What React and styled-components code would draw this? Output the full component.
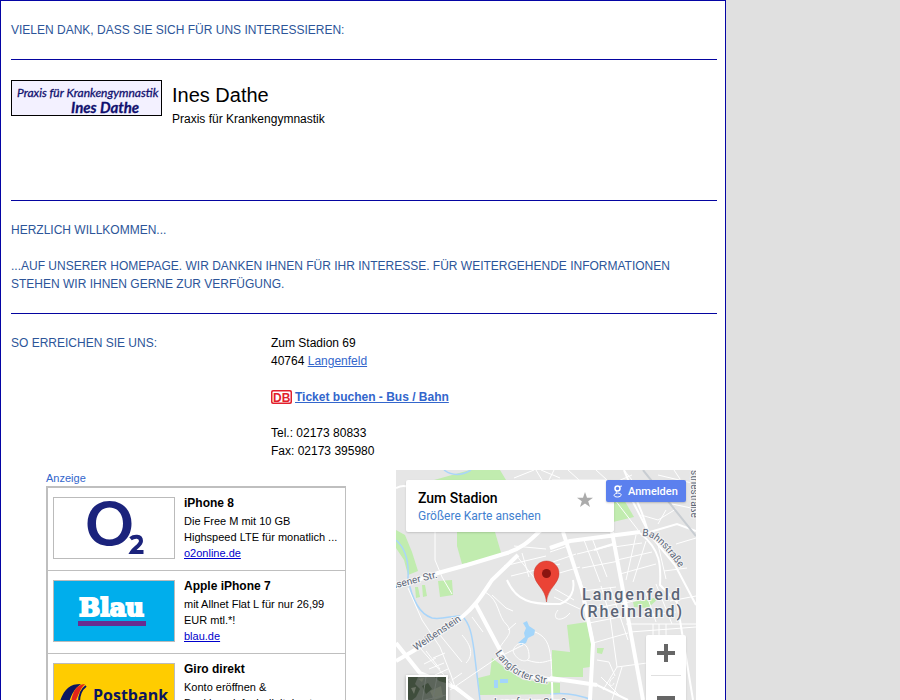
import styled, { createGlobalStyle } from "styled-components";

const GlobalStyle = createGlobalStyle`
	body {
		margin: 0;
		background: #e0e0e0;
		font-family: "Liberation Sans", Arial, sans-serif;
		font-size: 12px;
		line-height: 18px;
		color: #000;
	}
`;

const Page = styled.main`
	box-sizing: border-box;
	max-width: 726px;
	min-height: 100vh;
	padding: 0 8px 20px 10px;
	border: 1px solid #0505a5;
	background: #fff;
`;
const Section = styled.section`
	padding: 20px 0;
	border-bottom: 1px solid #0505a0;
`;
const Heading = styled.h2`
	margin: 0;
	font-size: 12px;
	font-weight: normal;
	text-transform: uppercase;
	color: #2c5599;
`;
const Intro = styled.p`
	margin: 18px 0 0;
	text-transform: uppercase;
	color: #2c5599;
`;
const Profile = styled.div`
	display: flex;
	align-items: flex-start;
	gap: 10px;
	min-height: 100px;
`;
const PraxisLogo = styled.svg`
	box-sizing: border-box;
	width: 151px;
	height: 36px;
	border: 1px solid #000;
	background: #f3f1ff;
`;
const Name = styled.h1`
	margin: 0;
	font-size: 20px;
	font-weight: normal;
	line-height: 30px;
`;
const Text = styled.p`
	margin: 0;
`;
const Contact = styled.section`
	display: grid;
	grid-template-columns: 260px 1fr;
	padding: 20px 0 10px;
`;
const Address = styled.address`
	display: grid;
	gap: 18px;
	font-style: normal;
`;
const Link = styled.a`
	color: #3366cc;
	font-weight: ${(props) => (props.$bold ? "bold" : "normal")};
`;
const Ticket = styled.p`
	display: flex;
	align-items: center;
	gap: 3px;
	margin: 0;
`;
const Columns = styled.div`
	display: flex;
	flex-wrap: wrap;
	align-items: flex-start;
	gap: 20px 50px;
	padding-left: 35px;
`;
const Ads = styled.aside`
	width: 300px;
	font-size: 11px;
	line-height: 16px;
`;
const AdLabel = styled.div`
	color: #3366cc;
`;
const AdList = styled.ul`
	margin: 0;
	padding: 0;
	list-style: none;
	border: solid #bfbfbf;
	border-width: 2px 1px 1px 2px;
`;
const AdItem = styled.li`
	box-sizing: border-box;
	display: flex;
	gap: 9px;
	min-height: 83px;
	padding: 7px 5px;
	border-bottom: 1px solid #bfbfbf;

	&:last-child {
		border-bottom: none;
	}
`;
const AdLogo = styled.svg`
	box-sizing: border-box;
	flex: none;
	width: 122px;
	height: 62px;
	margin-top: 2px;
	border: 1px solid #bbb;
	background: ${(props) => props.$background};
`;
const AdTitle = styled.h3`
	margin: 0 0 2px;
	font-size: 12px;
`;
const AdLink = styled.a`
	color: #0000cc;
`;
const MapBox = styled.div`
	position: relative;
	width: 300px;
	height: 300px;
	overflow: hidden;
	font-family: Roboto, sans-serif;
`;
const MapSvg = styled.svg`
	display: block;
	width: 100%;
	height: 100%;
`;
const PlaceCard = styled.div`
	position: absolute;
	top: 10px;
	left: 10px;
	box-sizing: border-box;
	display: flex;
	justify-content: space-between;
	width: 208px;
	height: 52px;
	padding: 9px 20px 9px 12px;
	border-radius: 2px;
	background: #fff;
	box-shadow: 0 1px 2px rgba(0, 0, 0, 0.15);
`;
const PlaceName = styled.div`
	font-size: 14px;
	font-weight: 500;
`;
const PlaceLink = styled.a`
	font-size: 12px;
	line-height: 16px;
	color: #427fd0;
	text-decoration: none;
`;
const StarButton = styled.button`
	width: 18px;
	height: 22px;
	padding: 2px 0;
	border: none;
	background: none;
	line-height: 0;
`;
const SignIn = styled.button`
	position: absolute;
	top: 10px;
	right: 10px;
	display: flex;
	align-items: center;
	gap: 5px;
	width: 80px;
	height: 22px;
	padding: 0 7px;
	border: none;
	border-radius: 2px;
	background: #5b80ee;
	color: #fff;
	font-family: Roboto, sans-serif;
	font-size: 11px;
	font-weight: 500;
	box-shadow: 0 1px 2px rgba(0, 0, 0, 0.2);
`;
const ZoomControl = styled.div`
	position: absolute;
	top: 165px;
	right: 10px;
	width: 40px;
	border-radius: 2px;
	background: #fff;
	box-shadow: 0 1px 2px rgba(0, 0, 0, 0.15);
`;
const ZoomButton = styled.button`
	display: flex;
	justify-content: center;
	width: 100%;
	height: 40px;
	padding: ${(props) => (props.$out ? "14px" : "9px")} 0 0;
	border: none;
	background: none;
`;
const Divider = styled.div`
	height: 1px;
	margin: 0 5px;
	background: #e0e0e0;
`;
const Satellite = styled.button`
	position: absolute;
	top: 205px;
	left: 10px;
	width: 42px;
	height: 42px;
	padding: 0;
	border: 2px solid #fff;
	line-height: 0;
	box-shadow: 0 1px 3px rgba(0, 0, 0, 0.3);
`;

const O2Logo = () => (
	<AdLogo viewBox="0 0 120 60" $background="#fff" role="img" aria-label="O2">
		<path
			fillRule="evenodd"
			fill="#1b237c"
			d="M55.500 3C69 3 77.500 12.500 77.500 25.500C77.500 39 69 48 55.500 48C42 48 33.500 39 33.500 25.500C33.500 12.500 42 3 55.500 3ZM55.500 9.500C47 9.500 42 16.500 42 25.500C42 35 47 41.500 55.500 41.500C64 41.500 69 35 69 25.500C69 16.500 64 9.500 55.500 9.500Z"
		/>
		<path
			fill="none"
			stroke="#1b237c"
			strokeWidth="4"
			d="M76.500 40.800C80 38 87 37.500 87 43C87 47 80.500 50 78 54H89.500"
		/>
	</AdLogo>
);

const BlauLogo = () => (
	<AdLogo viewBox="0 0 120 60" $background="#00aeec">
		<text
			x="25"
			y="35"
			fill="#fff"
			stroke="#fff"
			strokeWidth="2"
			fontFamily="DejaVu Serif, serif"
			fontSize="25"
			fontWeight="bold"
		>
			Blau
		</text>
		<path fill="#692c91" d="M24 40H92V45H24Z" />
	</AdLogo>
);

const PostbankLogo = () => (
	<AdLogo viewBox="0 0 120 60" $background="#fc0">
		<path
			fill="#0b1560"
			d="M6 37C11 24 16 20 27 20C20 25 18 30 15 38L19 48H12Z"
		/>
		<path
			fill="#e2231a"
			d="M17 38C19 27 22 21 31 20C25 26 25 31 21 38L25 48H20Z"
		/>
		<path fill="none" stroke="#0b1560" strokeWidth="2" d="M25 38C25 29 28 25 32 22" />
		<text
			x="39"
			y="37"
			fill="#0b1560"
			fontFamily="Open Sans, sans-serif"
			fontSize="16"
			fontWeight="bold"
		>
			Postbank
		</text>
	</AdLogo>
);

const ads = [
	{
		title: "iPhone 8",
		lines: ["Die Free M mit 10 GB", "Highspeed LTE für monatlich ..."],
		site: "o2online.de",
		Logo: O2Logo,
	},
	{
		title: "Apple iPhone 7",
		lines: ["mit Allnet Flat L für nur 26,99", "EUR mtl.*!"],
		site: "blau.de",
		Logo: BlauLogo,
	},
	{
		title: "Giro direkt",
		lines: ["Konto eröffnen &", "Banking einfach digital nutzen"],
		site: "postbank.de",
		Logo: PostbankLogo,
	},
];

const CityMap = () => (
	<MapSvg viewBox="0 0 300 300" role="img" aria-label="Karte">
		<defs>
			<path id="bahnstrasse" d="M246 66C256 66 264 70 287 103" />
			<path id="langforter" d="M99 183C109 198 122 212 158 214" />
		</defs>
		<path fill="#e6e6e6" d="M0 0H300V300H0Z" />
		<g fill="#c1ecaf">
			<path d="M38 10L56 5L74 0H104L110 10Z" />
			<path d="M61 62H99L106 86L66 94L61 76Z" />
			<path d="M0 60L9 65L16 82L22 101L12 105L8 90L0 78Z" />
			<path d="M217 30L227 28L238 47L217 52Z" />
			<path d="M171 155L191 152L195 173L194 197L187 198V207L156 207V180L174 182Z" />
			<path d="M201 178L208 178L206 184L201 183Z" />
			<path d="M237 132L264 127L252 138L238 137Z" />
			<path d="M42 111L56 110L57 125L44 127Z" />
			<path d="M19 117L22 117L24 127L20 128Z" />
			<path d="M26 115L29 115L31 126L27 127Z" />
			<path d="M96 188L109 198L127 210L164 213V224L84 225L82 208L94 205Z" />
		</g>
		<g fill="none" stroke="#a9d5fa" strokeWidth="1.500">
			<path d="M48 0C56 6 65 6 75 0M0 70C9 78 13 92 12 108C15 125 21 143 36 148C46 150 58 145 66 146C74 153 76 166 78 180L84 230L86 300" />
			<path d="M154 224C170 222 184 225 196 230" />
		</g>
		<path
			fill="#a3d5fa"
			d="M127 153L131 151L133 156L139 160L138 165L132 168L130 173L125 175L122 173L129 167L128 163L130 158ZM98 210H102V218H98ZM104 209H112V213H104Z"
		/>
		<g fill="none" stroke="#fff" strokeWidth="1">
			<path d="M12 118L26 150L44 177L55 205L60 220L84 236M54 220L101 188L127 175M62 150L44 165L66 192M66 165C75 175 78 185 70 193M39 62L39 90L46 107L56 124" />
			<path d="M89 122C104 130 101 146 111 155C117 163 112 165 104 177M96 125L110 138L117 141M120 153L112 160M76 147L87 162M117 181C120 170 134 170 133 188C130 194 120 190 117 181M139 162C154 168 155 180 156 210M131 190C145 195 150 191 156 190" />
			<path d="M140 0L146 10M158 0L153 10M172 0L183 10M120 85L140 110M108 96L150 86M115 106L164 94M126 83L133 107M118 76L150 79M145 0L164 8M118 8L138 0" />
			<path d="M156 10H210M200 0L211 10M228 0L236 10M213 15L236 5M245 45L262 50L280 39M256 15L270 27M262 5L300 14M270 18L285 10M278 0L284 9M270 40L262 54M219 30L242 60M236 26L246 23M276 34L300 39" />
			<path d="M154 82L172 76M157 92L180 84M160 104L184 97M188 70L204 112M196 68L211 107M181 84L218 75M186 98L223 91M218 77L246 73M221 90L256 82M224 104L260 94M240 65L230 110M250 71L237 112M261 70L270 109M280 74L300 68M268 101L291 98" />
			<path d="M159 119L178 130M158 127L184 139M162 140C154 150 166 153 174 143M191 140L226 133M193 153L229 146M205 116L214 146L221 197M187 121L220 117M214 117L232 170M225 134L250 128M231 148L280 142M230 154H300M234 162L300 157M260 114L276 154M249 120L260 152M274 131L300 126M257 154V170M263 154V170M270 154V170" />
			<path d="M197 173L232 163M221 197L251 193M221 197L207 220M201 190L213 192L219 206M218 213C215 220 210 212 218 207M205 207L226 228M226 197L216 230M24 178L56 214M30 181L44 199M37 188L49 183M28 194L40 188M33 199L48 193M39 205L52 199M41 213L54 209M56 210L66 203" />
		</g>
		<g fill="none" stroke="#fff" strokeWidth="2">
			<path d="M0 18C8 14 13 16 16 22M111 110C120 131 135 135 164 134C175 130 179 120 177 110M154 78L174 71L244 62M167 62L184 112M216 62L226 115L247 230L258 300M236 30L254 65L279 95L300 135M244 63C265 80 265 96 264 115L281 132L297 230M184 110L197 170L194 230V300M154 208L201 215L232 230M156 212L158 300" />
			<path d="M228 0L246 43L253 64M254 62L281 54L300 61M198 80L217 74" />
		</g>
		<g fill="none" stroke="#fff" strokeWidth="4">
			<path d="M0 117L42 103L71 95L111 83C132 77 140 62 157 50M0 191L24 177L66 147C80 136 88 122 96 110L122 85M0 173L24 203L60 218L95 245M79 133L104 180C116 205 135 208 164 210" />
			<path d="M167 62L186 120L197 174L194 230M154 208L201 215M216 62L226 115L247 230M154 78L174 71L244 62" />
		</g>
		<path fill="none" stroke="#c8cdd2" strokeWidth="2" d="M247 0L300 66" />
		<g
			fill="#5b6577"
			stroke="#f5f5f5"
			strokeWidth="2"
			paintOrder="stroke"
			fontFamily="Roboto, sans-serif"
			fontSize="10"
		>
			<text transform="translate(-4 119) rotate(-14)">usener Str.</text>
			<text transform="translate(20 181) rotate(-34)">Weißenstein</text>
			<text>
				<textPath href="#langforter">Langforter Str.</textPath>
			</text>
			<text>
				<textPath href="#bahnstrasse">Bahnstraße</textPath>
			</text>
			<text transform="translate(295 0) rotate(90)">striestraße</text>
			<text x="98" y="236">
				Langforter Straße
			</text>
			<g fontSize="16" fontWeight="500" textAnchor="middle" letterSpacing="2">
				<text x="236" y="130">
					Langenfeld
				</text>
				<text x="236" y="147">
					(Rheinland)
				</text>
			</g>
		</g>
		<path
			fill="#ea4335"
			stroke="#c5362b"
			strokeWidth="0.500"
			d="M150.500 132C149.500 118 138 114 138 103.500C138 96.500 143.500 91 150.500 91C157.500 91 163 96.500 163 103.500C163 114 151.500 118 150.500 132Z"
		/>
		<circle cx="150.500" cy="103.500" r="4.500" fill="#8b1410" />
	</MapSvg>
);

const LocationMap = () => (
	<MapBox>
		<CityMap />
		<PlaceCard>
			<div>
				<PlaceName>Zum Stadion</PlaceName>
				<PlaceLink href="#karte">Größere Karte ansehen</PlaceLink>
			</div>
			<StarButton aria-label="Speichern">
				<svg width="18" height="18" viewBox="0 0 18 18">
					<path
						fill="#ababab"
						d="M9 1L11 6.700H17L12.200 10.300L14 16L9 12.500L4 16L5.800 10.300L1 6.700H7Z"
					/>
				</svg>
			</StarButton>
		</PlaceCard>
		<SignIn>
			<svg width="10" height="14" viewBox="0 0 10 14" fill="none" stroke="#fff">
				<ellipse cx="4.500" cy="4.500" rx="2.500" ry="2.500" strokeWidth="1.500" />
				<path d="M6 2.500L9 2M4 7C2 8 3 9 6 9.200C10 10 8 13 4.500 13C0 13 0 10 4 9.200" />
			</svg>
			Anmelden
		</SignIn>
		<Satellite aria-label="Satellit">
			<svg width="38" height="38" viewBox="0 0 38 38">
				<path fill="#5c655b" d="M0 0H38V38H0Z" />
				<path fill="#3f4d3c" d="M0 0H10L7 7L12 12L8 20L3 24L0 22ZM27 0H38V6L31 4ZM14 9L20 6L24 12L18 17Z" />
				<path fill="#6c7466" d="M10 2L16 1L14 5ZM3 11L8 10L6 17ZM22 14L33 9L35 20L26 23Z" />
				<path stroke="#6d756e" d="M18 0L12 38M29 0L22 38M0 27L38 18" />
			</svg>
		</Satellite>
		<ZoomControl>
			<ZoomButton aria-label="Vergrößern">
				<svg width="18" height="18" viewBox="0 0 18 18">
					<path fill="#666" d="M7 0H11V7H18V11H11V18H7V11H0V7H7Z" />
				</svg>
			</ZoomButton>
			<Divider />
			<ZoomButton $out aria-label="Verkleinern">
				<svg width="18" height="18" viewBox="0 0 18 18">
					<path fill="#666" d="M0 6H18V11H0Z" />
				</svg>
			</ZoomButton>
		</ZoomControl>
	</MapBox>
);

const App = () => {
	return (
		<>
			<GlobalStyle />
			<Page>
				<Section>
					<Heading>Vielen Dank, dass Sie sich für uns interessieren:</Heading>
				</Section>
				<Section>
					<Profile>
						<PraxisLogo viewBox="0 0 149 34">
							<g
								fill="#10106e"
								stroke="#10106e"
								strokeWidth="0.300"
								fontFamily="Lato, sans-serif"
								fontStyle="italic"
							>
								<text x="5" y="16" fontSize="12">
									Praxis für Krankengymnastik
								</text>
								<text x="59" y="32" fontSize="15" fontWeight="bold">
									Ines Dathe
								</text>
							</g>
						</PraxisLogo>
						<div>
							<Name>Ines Dathe</Name>
							<Text>Praxis für Krankengymnastik</Text>
						</div>
					</Profile>
				</Section>
				<Section>
					<Heading>Herzlich Willkommen...</Heading>
					<Intro>
						...auf unserer Homepage. Wir danken Ihnen für Ihr Interesse. Für
						weitergehende Informationen stehen wir Ihnen gerne zur Verfügung.
					</Intro>
				</Section>
				<Contact>
					<Heading>So erreichen Sie uns:</Heading>
					<Address>
						<Text>
							Zum Stadion 69
							<br />
							40764 <Link href="#langenfeld">Langenfeld</Link>
						</Text>
						<Ticket>
							<svg width="21" height="14" viewBox="0 0 21 14" aria-hidden="true">
								<rect width="21" height="14" rx="2" fill="#e2202c" />
								<rect x="1.500" y="1.500" width="18" height="11" rx="1" fill="#fff" />
								<text
									x="2"
									y="11.500"
									fill="#e2202c"
									fontSize="12"
									fontWeight="bold"
								>
									DB
								</text>
							</svg>
							<Link $bold href="#ticket">
								Ticket buchen - Bus / Bahn
							</Link>
						</Ticket>
						<Text>
							Tel.: 02173 80833
							<br />
							Fax: 02173 395980
						</Text>
					</Address>
				</Contact>
				<Columns>
					<Ads>
						<AdLabel>Anzeige</AdLabel>
						<AdList>
							{ads.map(({ title, lines, site, Logo }) => (
								<AdItem key={title}>
									<Logo />
									<div>
										<AdTitle>{title}</AdTitle>
										{lines.map((line) => (
											<Text key={line}>{line}</Text>
										))}
										<AdLink href={`#${site}`}>{site}</AdLink>
									</div>
								</AdItem>
							))}
						</AdList>
					</Ads>
					<LocationMap />
				</Columns>
			</Page>
		</>
	);
};

export default App;
